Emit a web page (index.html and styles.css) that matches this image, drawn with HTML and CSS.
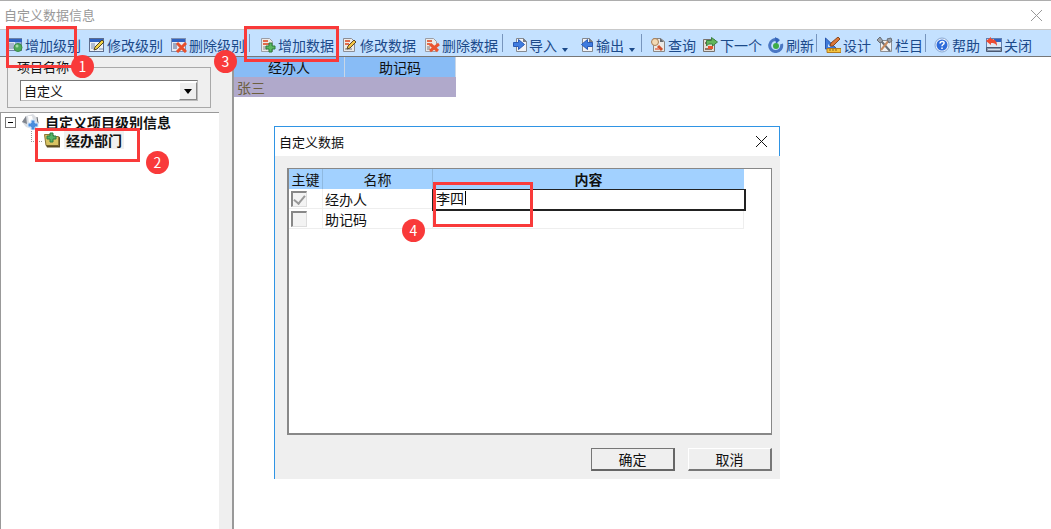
FILE: index.html
```html
<!DOCTYPE html>
<html lang="zh-CN">
<head>
    <meta charset="UTF-8">
    <meta name="viewport" content="width=device-width, initial-scale=1.0">
    <title>自定义数据信息</title>
    <link rel="stylesheet" href="styles.css">
</head>
<body>
    <header class="titlebar">
        <h1>自定义数据信息</h1>
        <button class="close" aria-label="关闭窗口">
            <svg width="11" height="11" viewBox="0 0 11 11"><path d="M0 0L11 11M11 0L0 11" stroke="currentColor"/></svg>
        </button>
    </header>

    <nav class="toolbar">
        <div class="group wide">
            <button class="tool">
                <svg class="icon" viewBox="0 0 16 16"><rect x="0.5" y="1.5" width="14" height="12" fill="#dfe6f2" stroke="#6d83a8"/><rect x="1" y="2" width="14" height="3" fill="#2f62c0"/><path d="M2 7h5M2 9h5M2 11h5" stroke="#7288ad"/><path d="M8 5h6v5H8z" fill="#8fb0e2"/><circle cx="11" cy="10.500" r="4" fill="#4fab5a" stroke="#3c8a48"/><circle cx="10" cy="9" r="1.500" fill="#a5dba8"/></svg>
                增加级别
            </button>
            <button class="tool">
                <svg class="icon" viewBox="0 0 16 16"><rect x="0.5" y="1.5" width="14" height="13" fill="#eef1f6" stroke="#5e6e8e"/><rect x="1" y="2" width="13" height="3" fill="#2f62c0"/><path d="M2 7h4M2 9h4M2 11h3M10 12h4" stroke="#7288ad"/><path d="M5 13l1-3 7-7 2 2-7 7z" fill="#f0d044" stroke="#4d4426"/></svg>
                修改级别
            </button>
            <button class="tool">
                <svg class="icon" viewBox="0 0 16 16"><rect x="0.5" y="1.5" width="14" height="13" fill="#e6ebf4" stroke="#7f91b2"/><rect x="1" y="2" width="13" height="3" fill="#2f62c0"/><path d="M2 7h4M2 9h4M2 11h4" stroke="#53698f"/><path d="M6 6l9 9M15 6l-9 9" stroke="#e8502c" stroke-width="3"/></svg>
                删除级别
            </button>
        </div>
        <span class="sep"></span>
        <div class="group wide">
            <button class="tool">
                <svg class="icon" viewBox="0 0 16 16"><path d="M1.500 1.500h8l3 3v10h-11z" fill="#eceae8" stroke="#9b9da5"/><path d="M3 4h5M3 7h6" stroke="#e26b4b" stroke-width="2"/><path d="M3 10h4M3 12h4" stroke="#8c8c92"/><path d="M9 6h3v3h3v3h-3v3H9v-3H6V9h3z" fill="#5bb85f" stroke="#2f7a3c"/></svg>
                增加数据
            </button>
            <button class="tool">
                <svg class="icon" viewBox="0 0 16 16"><path d="M1.500 1.500h8l3 3v10h-11z" fill="#eceae8" stroke="#8b8d95"/><path d="M3 4h5M3 7h4" stroke="#e26b4b" stroke-width="2"/><path d="M3 12h7" stroke="#77777c"/><path d="M5 12l1-3 6-6 2 2-6 6z" fill="#f2c445" stroke="#5d4826"/></svg>
                修改数据
            </button>
            <button class="tool">
                <svg class="icon" viewBox="0 0 16 16"><path d="M1.500 1.500h8l3 3v10h-11z" fill="#eceae8" stroke="#9b9da5"/><path d="M3 4h5M3 7h3" stroke="#e26b4b" stroke-width="2"/><path d="M3 10h3M3 12h3" stroke="#77777c"/><path d="M6 7l8 7M15 7l-9 7" stroke="#ea5530" stroke-width="3"/></svg>
                删除数据
            </button>
        </div>
        <span class="sep"></span>
        <div class="group menus">
            <button class="tool drop">
                <svg class="icon" viewBox="0 0 16 16"><path d="M3.500 1.500h7l3 3v10h-10z" fill="#f1f2f5" stroke="#85898f"/><path d="M10 1l4 4h-4z" fill="#777b82"/><path d="M0.500 5.500h5v-3l6 5-6 5v-3h-5z" fill="#3f7ce0" stroke="#2859b4"/></svg>
                导入
            </button>
            <button class="tool drop">
                <svg class="icon" viewBox="0 0 16 16"><path d="M2.500 1.500h7l3 3v10h-10z" fill="#f1f2f5" stroke="#85898f"/><path d="M9 1l4 4H9z" fill="#777b82"/><path d="M12.500 5.500h-5v-3l-6 5 6 5v-3h5z" fill="#3f7ce0" stroke="#2859b4"/></svg>
                输出
            </button>
        </div>
        <span class="sep"></span>
        <div class="group">
            <button class="tool">
                <svg class="icon" viewBox="0 0 16 16"><path d="M3.500 1.500h7l4 3v10h-11z" fill="#ece9e5" stroke="#8b8783"/><path d="M10 1l4 4h-4z" fill="#67696e"/><path d="M8 9l4 4" stroke="#cf512d" stroke-width="3"/><circle cx="5" cy="5" r="3.500" fill="#f2d9b4" stroke="#a77d56"/><path d="M5 12h4" stroke="#e38d78" stroke-width="2"/></svg>
                查询
            </button>
            <button class="tool">
                <svg class="icon" viewBox="0 0 16 16"><path d="M1.500 2.500h11v12h-11z" fill="#e5ded7" stroke="#77716b"/><path d="M3 6h4M3 12h7" stroke="#8d7565" stroke-width="2"/><path d="M6 9h5v3H6z" fill="#e8542f"/><path d="M4.500 3.500h5v-3l6 4.500-5 4V7h-4l-2 2z" fill="#62b65c" stroke="#3c8040"/></svg>
                下一个
            </button>
            <button class="tool">
                <svg class="icon" viewBox="0 0 16 16"><path d="M10 3a6 6 0 1 0 3.500 4" fill="none" stroke="#4a77c4" stroke-width="3"/><path d="M7 0l5 3-4 4z" fill="#3264ba"/><circle cx="8" cy="9" r="3" fill="#3dab48"/></svg>
                刷新
            </button>
        </div>
        <span class="sep"></span>
        <div class="group">
            <button class="tool">
                <svg class="icon" viewBox="0 0 16 16"><path d="M0.500 1v11H12z" fill="#3e7bdb" stroke="#2856ab"/><path d="M3 7v3h3z" fill="#c6e0ff"/><path d="M5 9l1-3 7-6 2 2-7 7z" fill="#dc7638" stroke="#87491f"/><path d="M2 11.500h14v4H2z" fill="#f4c440" stroke="#b47b1d"/><path d="M5 12v2M8 12v2M11 12v2" stroke="#8d6115"/></svg>
                设计
            </button>
            <button class="tool">
                <svg class="icon" viewBox="0 0 16 16"><path d="M3.500 3.500h11v11h-11z" fill="#f2f2f2" stroke="#8b8e93"/><path d="M2 1l3 4 8 9" fill="none" stroke="#6a7078" stroke-width="2"/><path d="M13 2L4 13" stroke="#c88c60" stroke-width="2"/><path d="M0 3l3-3 3 4-3 2zM10 2l4-1 1 3-3 2z" fill="#9da2a9" stroke="#686e76"/></svg>
                栏目
            </button>
        </div>
        <span class="sep"></span>
        <div class="group">
            <button class="tool">
                <svg class="icon" viewBox="0 0 16 16"><circle cx="8" cy="8" r="7" fill="#e9f1fb" stroke="#8ba9d3"/><circle cx="8" cy="8" r="5.500" fill="#2f6cda"/><path d="M6 6.500c0-3 5-2.500 4 0-.5 1.200-2 1-2 2.800M8 10.500v1.500" fill="none" stroke="#fff" stroke-width="1.500"/></svg>
                帮助
            </button>
            <button class="tool">
                <svg class="icon" viewBox="0 0 16 16"><rect x="0.500" y="1.500" width="15" height="9" fill="#dfe8f5" stroke="#5f7fb2"/><path d="M8 2h7v3H8z" fill="#2f62c0"/><path d="M0.500 10.500h15v4h-15z" fill="#8696ae" stroke="#4b5870"/><path d="M2 12.500h12" stroke="#d3dce8"/><path d="M0 4l5-4v2c4 0 6 2 6 7-2-3-3-3-6-3v2z" fill="#ed4a31"/></svg>
                关闭
            </button>
        </div>
    </nav>

    <main class="workspace">
        <aside class="sidebar">
            <fieldset class="project">
                <legend><label for="project">项目名称</label></legend>
                <div class="combo">
                    <select id="project">
                        <option>自定义</option>
                    </select>
                    <span class="combo-arrow"></span>
                </div>
            </fieldset>
            <ul class="tree">
                <li>
                    <div class="node">
                        <span class="toggle"></span>
                        <svg class="icon node-icon" viewBox="0 0 16 16"><path d="M0 8l4-6 7-2 4 4v7l-5 4-6-2z" fill="#dadde2"/><path d="M0 8l4-6 1 8z" fill="#80858d"/><path d="M6 2l4 0 1 4-4 3z" fill="#fff"/><path d="M15 3l1 6-3 5" fill="none" stroke="#62666d"/><path d="M9 6h4v3h3v4h-3v3H9v-3H6V9h3z" fill="#4a8ddd" stroke="#d5e8fb"/></svg>
                        <span class="node-text">自定义项目级别信息</span>
                    </div>
                    <ul>
                        <li class="node child">
                            <svg class="icon node-icon" viewBox="0 0 16 16"><path d="M0.500 2.500h8l2 2h4v9H2z" fill="#d8c363" stroke="#8a7735"/><path d="M2 13.500h13v-9l1 1v10H3z" fill="#5b4c23"/><path d="M6 1h3v3h3v3H9v3H6V7H3V4h3z" fill="#54b267" stroke="#2c7d43"/></svg>
                            <span class="node-text selected">经办部门</span>
                        </li>
                    </ul>
                </li>
            </ul>
        </aside>
        <section class="content">
            <table class="records">
                <thead>
                    <tr><th>经办人</th><th>助记码</th></tr>
                </thead>
                <tbody>
                    <tr><td>张三</td><td></td></tr>
                </tbody>
            </table>
        </section>
    </main>

    <div class="dialog" role="dialog" aria-labelledby="dialog-title">
        <div class="dialog-title">
            <h2 id="dialog-title">自定义数据</h2>
            <button class="close" aria-label="关闭对话框">
                <svg width="11" height="11" viewBox="0 0 11 11"><path d="M0 0L11 11M11 0L0 11" stroke="currentColor"/></svg>
            </button>
        </div>
        <div class="dialog-body">
            <div class="grid-frame">
                <table class="fields">
                    <thead>
                        <tr><th class="col-key">主键</th><th class="col-name">名称</th><th class="col-value">内容</th></tr>
                    </thead>
                    <tbody>
                        <tr>
                            <td><input type="checkbox" aria-label="经办人主键" checked disabled></td>
                            <td><label for="person">经办人</label></td>
                            <td class="editing"><input type="text" id="person" value="李四"><span class="caret"></span></td>
                        </tr>
                        <tr>
                            <td><input type="checkbox" aria-label="助记码主键" disabled></td>
                            <td>助记码</td>
                            <td></td>
                        </tr>
                    </tbody>
                </table>
            </div>
            <div class="actions">
                <button class="btn default">确定</button>
                <button class="btn">取消</button>
            </div>
        </div>
    </div>

    <!-- step marks -->
    <span class="mark mark-1"></span>
    <span class="mark mark-2"></span>
    <span class="mark mark-3"></span>
    <span class="mark mark-4"></span>
    <span class="step step-1">1</span>
    <span class="step step-2">2</span>
    <span class="step step-3">3</span>
    <span class="step step-4">4</span>
</body>
</html>
```
FILE: styles.css
```css
* {
    box-sizing: border-box;
}
body {
    position: relative;
    display: flex;
    flex-direction: column;
    min-height: 100vh;
    margin: 0;
    background: #fff;
    color: #111;
    font-family: "Noto Sans CJK SC", sans-serif;
    font-size: 14px;
    line-height: 20px;
}
button, input, select {
    font: inherit;
    color: inherit;
}
h1, h2, ul {
    margin: 0;
    padding: 0;
}
.titlebar {
    display: flex;
    align-items: center;
    justify-content: space-between;
    height: 30px;
    padding: 0 9px 0 4px;
    border-top: 1px solid #adadad;
    border-bottom: 1px solid #c9c9c9;
    color: #999;
}
h1, h2 {
    font-size: 13px;
    font-weight: normal;
}
.close {
    display: flex;
    padding: 0;
    border: 0;
    background: none;
}

/* toolbar */
.toolbar {
    display: flex;
    align-items: center;
    height: 27px;
    padding: 3px 0 0 5px;
    background: #c4e1ff;
    border-bottom: 1px solid #777;
    white-space: nowrap;
}
.group {
    display: flex;
    gap: 6px;
}
.wide {
    gap: 8px;
    padding: 0 2px;
}
.menus {
    gap: 12px;
    padding: 0 4px 0 2px;
}
.tool {
    display: flex;
    align-items: center;
    gap: 2px;
    padding: 0;
    border: 0;
    background: none;
    color: #1c4a8a;
}
.icon {
    flex: none;
    width: 16px;
    height: 16px;
}
.drop {
    gap: 0;
}
.drop::after {
    content: "";
    align-self: flex-end;
    margin: 0 0 3px 5px;
    border: 3px solid transparent;
    border-top: 4px solid #1c4a8a;
    border-bottom: 0;
}
.sep {
    width: 1px;
    height: 18px;
    margin: 0 8px 4px 2px;
    background: #7795bd;
}

/* panes */
.workspace {
    display: flex;
    flex: 1;
}
.sidebar {
    display: flex;
    flex-direction: column;
    flex: none;
    width: 234px;
    padding-right: 13px;
    background: #efefef;
    border-right: 2px solid #999;
}
.project {
    margin: 0 8px 4px 7px;
    padding: 3px 12px 6px;
    border: 1px solid #a9a9a9;
}
.project legend {
    padding: 0 2px;
    margin-left: -5px;
    font-size: 13px;
    line-height: 20px;
}
.combo {
    position: relative;
}
.combo select {
    display: block;
    width: 100%;
    height: 21px;
    padding: 0 3px;
    border: 1px solid;
    border-color: #777 #bbb #bbb #777;
    border-radius: 0;
    background: #fff;
    font-size: 13px;
    line-height: 18px;
    appearance: none;
}
.combo-arrow {
    position: absolute;
    top: 2px;
    right: 1px;
    display: flex;
    align-items: center;
    justify-content: center;
    width: 18px;
    height: 18px;
    background: #efefef;
    border: 1px solid;
    border-color: #fff #888 #888 #fff;
    pointer-events: none;
}
.combo-arrow::after {
    content: "";
    border: 4px solid transparent;
    border-top: 5px solid #000;
    border-bottom: 0;
}
.tree {
    flex: 1;
    padding: 0 0 0 4px;
    background: #fff;
    border-top: 1px solid #999;
    border-left: 1px solid #999;
    list-style: none;
    font-weight: bold;
}
.tree ul {
    list-style: none;
    margin-left: 26px;
}
.node {
    display: flex;
    align-items: center;
    height: 18px;
}
.toggle {
    display: flex;
    align-items: center;
    justify-content: center;
    width: 11px;
    height: 11px;
    border: 1px solid #777;
}
.toggle::after {
    content: "";
    width: 5px;
    height: 1px;
    background: #000;
}
.node .node-icon {
    width: 18px;
    margin: 0 4px 0 5px;
}
.node-text {
    padding: 0 2px;
    line-height: 18px;
}
.selected {
    background: #f0f0f0;
}
.child .node-icon {
    margin: 0 3px 0 1px;
}
.child::before {
    content: "";
    align-self: flex-start;
    width: 10px;
    height: 10px;
    border-left: 1px dotted #999;
    border-bottom: 1px dotted #999;
}
.content {
    flex: 1;
    background: #fff;
}
table {
    border-spacing: 0;
    table-layout: fixed;
}
th, td {
    height: 20px;
    padding: 0;
    line-height: 18px;
    text-align: left;
}
th {
    font-weight: normal;
    text-align: center;
}
.records {
    width: 222px;
}
.records th {
    background: #88bcf6;
    border-right: 1px solid #c9d6e6;
}
.records td {
    padding-left: 3px;
    background: #b0a9cb;
    color: #6d6040;
}

/* dialog */
.dialog {
    position: absolute;
    top: 126px;
    left: 274px;
    width: 506px;
    background: #efefef;
    border-left: 1px solid #2f94e4;
}
.dialog-title {
    display: flex;
    align-items: center;
    justify-content: space-between;
    height: 30px;
    padding: 0 12px 0 4px;
    background: #fff;
    border-top: 1px solid #2f94e4;
    border-right: 1px solid #2f94e4;
}
.dialog-body {
    padding: 12px 8px 8px 12px;
}
.grid-frame {
    min-height: 267px;
    background: #fff;
    border: 2px solid #888;
    border-width: 1px 1px 2px 2px;
}
.fields {
    width: 455px;
}
.fields th {
    background: #a2d1ff;
    border-right: 1px solid #8fb9e0;
}
.fields .col-key {
    width: 34px;
}
.fields .col-name {
    width: 110px;
}
.fields .col-value {
    border-right: 0;
    font-weight: bold;
}
.fields td {
    border-right: 1px solid #eee;
    border-bottom: 1px solid #eee;
    padding-left: 2px;
}
.fields input[type="checkbox"] {
    display: flex;
    justify-content: center;
    width: 16px;
    height: 16px;
    margin: 0;
    border: 1px solid;
    border-width: 2px 1px 1px 2px;
    border-color: #888 #ddd #ddd #888;
    background: #f3f3f3;
    appearance: none;
}
.fields input[type="checkbox"]:checked::after {
    content: "";
    width: 5px;
    height: 9px;
    border: solid #999;
    border-width: 0 2px 2px 0;
    transform: rotate(40deg);
}
.fields .editing {
    position: relative;
    padding: 0;
}
.editing input {
    position: absolute;
    top: 0;
    left: -1px;
    width: calc(100% + 4px);
    height: 22px;
    padding: 0 2px 4px;
    border: 2px solid #222;
    border-top-width: 1px;
    border-radius: 0;
    outline: 0;
    background: #fff;
    line-height: 17px;
}
.caret {
    position: absolute;
    top: 2px;
    left: 32px;
    width: 1px;
    height: 14px;
    background: #000;
}
.actions {
    display: flex;
    justify-content: flex-end;
    gap: 13px;
    margin-top: 13px;
}
.btn {
    width: 84px;
    height: 23px;
    padding: 0;
    background: #efefef;
    border: 1px solid;
    border-color: #fff #777 #777 #fff;
    border-width: 1px 2px 2px 1px;
    line-height: 18px;
}
.btn.default {
    border-color: #777 #666 #666 #777;
}

/* step marks */
.mark {
    position: absolute;
    border: 3px solid #f93a3a;
    pointer-events: none;
}
.mark-1 {
    top: 26px;
    left: 6px;
    width: 71px;
    height: 42px;
}
.mark-2 {
    top: 128px;
    left: 35px;
    width: 105px;
    height: 34px;
}
.mark-3 {
    top: 26px;
    left: 244px;
    width: 95px;
    height: 36px;
}
.mark-4 {
    top: 182px;
    left: 433px;
    width: 100px;
    height: 45px;
}
.step {
    position: absolute;
    width: 23px;
    height: 23px;
    border-radius: 50%;
    background: #f93a3a;
    color: #fff;
    line-height: 22px;
    text-align: center;
}
.step-1 {
    top: 55px;
    left: 71px;
}
.step-2 {
    top: 151px;
    left: 146px;
}
.step-3 {
    top: 50px;
    left: 214px;
}
.step-4 {
    top: 219px;
    left: 402px;
}
```
